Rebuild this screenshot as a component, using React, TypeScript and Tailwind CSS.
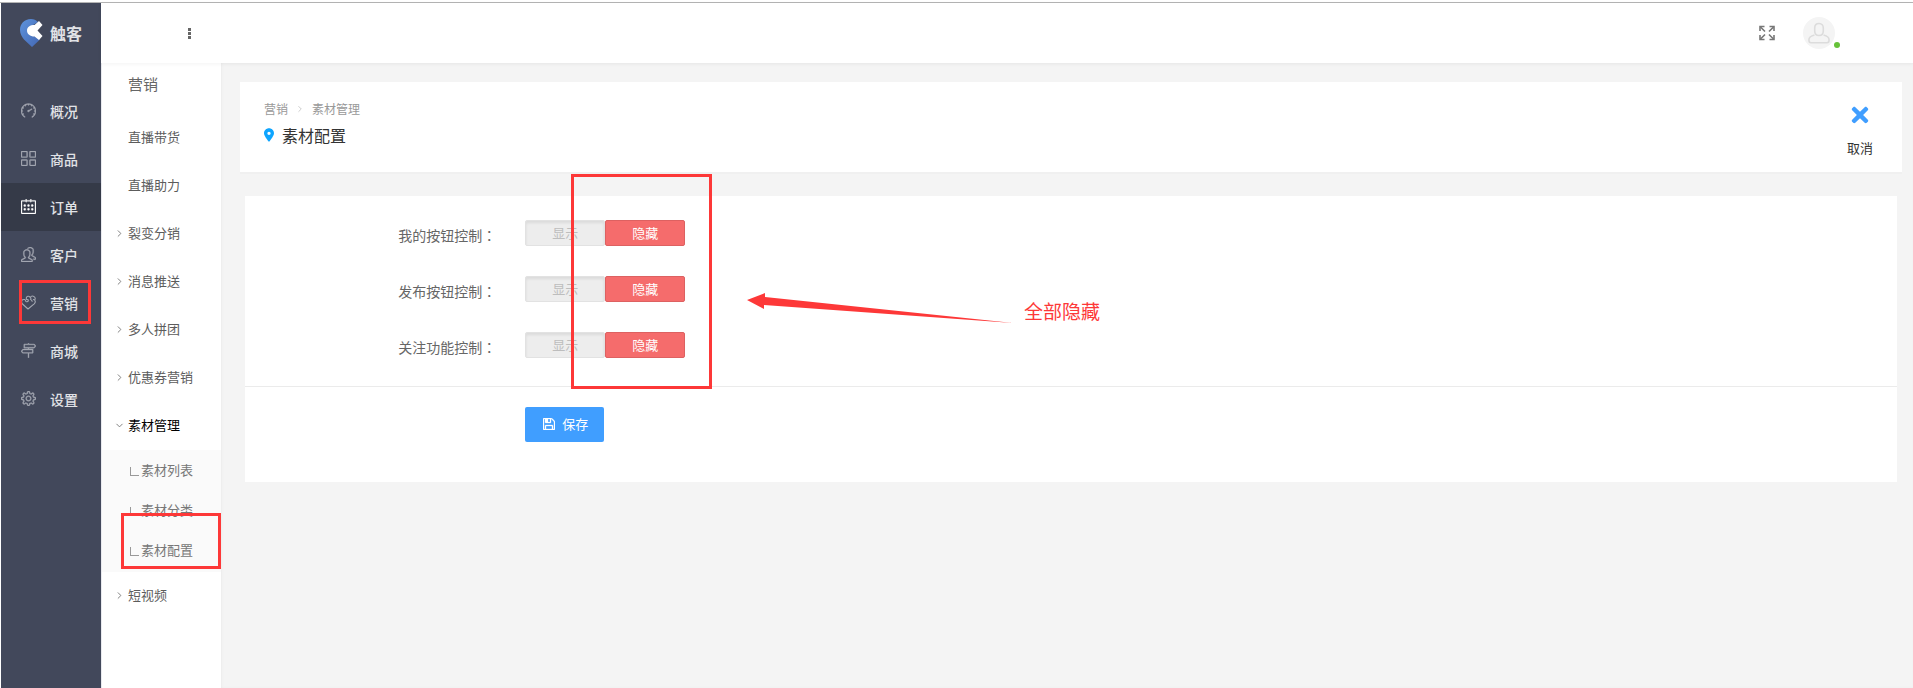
import { useState } from 'react';
import { ChevronDown, ChevronRight } from 'lucide-react';
import { FaTimes } from 'react-icons/fa';
import { FaLocationDot } from 'react-icons/fa6';
import {
  SlSpeedometer,
  SlGrid,
  SlCalender,
  SlPeople,
  SlDirections,
  SlSettings,
} from 'react-icons/sl';

const mainNav = [
  { label: '概况', icon: <SlSpeedometer size={15} strokeWidth={24} /> },
  { label: '商品', icon: <SlGrid size={15} strokeWidth={24} /> },
  { label: '订单', icon: <SlCalender size={15} strokeWidth={24} />, active: true },
  { label: '客户', icon: <SlPeople size={15} strokeWidth={24} /> },
  { label: '营销', icon: <MarketingIcon />, marked: true },
  { label: '商城', icon: <SlDirections size={15} strokeWidth={24} /> },
  { label: '设置', icon: <SlSettings size={15} strokeWidth={24} /> },
];

const subNav = [
  { label: '直播带货' },
  { label: '直播助力' },
  { label: '裂变分销', expandable: true },
  { label: '消息推送', expandable: true },
  { label: '多人拼团', expandable: true },
  { label: '优惠券营销', expandable: true },
  {
    label: '素材管理',
    expandable: true,
    children: [
      { label: '素材列表' },
      { label: '素材分类' },
      { label: '素材配置', marked: true },
    ],
  },
  { label: '短视频', expandable: true },
];

const settings = [
  { id: 'mine', label: '我的按钮控制' },
  { id: 'publish', label: '发布按钮控制' },
  { id: 'follow', label: '关注功能控制' },
];

function Logo() {
  return (
    <svg viewBox="0 0 24 28" className="w-6 h-7 shrink-0" aria-hidden="true">
      <defs>
        <linearGradient id="pin" x1="0" y1="0" x2="1" y2="1">
          <stop offset="0" stopColor="#5e93dc" />
          <stop offset="1" stopColor="#4468b4" />
        </linearGradient>
      </defs>
      <path d="M12 0C5 0 1 5 1 11c0 4 2 7 4 9.500L13 28l8-7.500-8.500-4.500L8 11l4.500-4L19 3C17 1 15 0 12 0Z" fill="url(#pin)" />
      <path d="M20 2 23.500 6 18.500 11.500 23.500 17 20 21 15.500 17.500C11 17.500 8 15 8 11.500S11 6 15.500 6Z" fill="#fff" />
    </svg>
  );
}

function MarketingIcon() {
  return (
    <svg viewBox="0 0 15 15" className="size-[15px]" fill="none" stroke="currentColor" strokeWidth="1.1" strokeLinejoin="round" aria-hidden="true">
      <path d="M7 14 1.500 9C.2 7.500.4 5.600 1.600 4.800c1.300-.8 2.700-.2 3 1 .3 1.300 2.200 1.300 2.600.2.500-1.300-.6-1.700-1.600-1.500-.7-1.400-.1-2.900 1.300-3.200 1.200-.2 2 .4 2.300 1.300.7-1.300 2.200-1.900 3.600-1.200C14.400 2.200 14.600 4 13.600 5c1 1.400.7 2.900-.4 3.900Z" />
      <path d="M9.200 2.600c.9.400 1 1.700 0 2.200M10 5c.9.200 1.300 1 1 1.800M13.600 5c-.5-.5-1.100-.6-1.600-.4" />
    </svg>
  );
}

function FullscreenIcon() {
  return (
    <svg viewBox="0 0 16 16" className="size-4" fill="none" stroke="currentColor" strokeWidth="1.6" aria-hidden="true">
      <path d="M1 6V1.500h4.500M10.500 1.500H15V6M15 10v4.500h-4.500M5.500 14.500H1V10" />
      <path d="M1.500 2 6 6.500M14.500 2 10 6.500M14.500 14 10 9.500M1.500 14 6 9.500" />
    </svg>
  );
}

function SaveIcon() {
  return (
    <svg viewBox="0 128 1536 1536" className="size-3" fill="currentColor" stroke="currentColor" strokeWidth="40" aria-hidden="true">
      <path d="M384 1536h768v-384h-768v384zm896 0h128v-896q0-14-10-38.500t-20-34.500l-281-281q-10-10-34-20t-39-10v416q0 40-28 68t-68 28h-576q-40 0-68-28t-28-68v-416h-128v1280h128v-416q0-40 28-68t68-28h832q40 0 68 28t28 68v416zm-384-928v-320q0-13-9.500-22.500t-22.500-9.500h-192q-13 0-22.500 9.500t-9.500 22.500v320q0 13 9.500 22.500t22.500 9.500h192q13 0 22.500-9.500t9.500-22.500zm640 32v928q0 40-28 68t-68 28h-1344q-40 0-68-28t-28-68v-1344q0-40 28-68t68-28h928q40 0 88 20t76 48l280 280q28 28 48 76t20 88z" />
    </svg>
  );
}

function MainSidebar() {
  return (
    <aside className="w-[100px] shrink-0 bg-[#42485b] text-[#e0e2e6]">
      <a href="#home" className="flex h-[60px] items-center gap-[7px] pb-px pl-[18px] text-base font-bold">
        <Logo />
        触客
      </a>
      <nav className="mt-6">
        {mainNav.map(({ label, icon, active, marked }) => (
          <a
            key={label}
            href={`#${label}`}
            className={`relative flex h-12 items-center gap-3.5 pb-px pl-5 text-sm font-medium ${active ? 'bg-[#353a48]' : ''}`}
          >
            <span className={active ? 'text-white' : 'text-[#a3a7b1]'}>{icon}</span>
            {label}
            {marked && <span className="absolute top-px left-[18px] h-11 w-[72px] border-3 border-[#fd3838]" />}
          </a>
        ))}
      </nav>
    </aside>
  );
}

function SubSidebar() {
  return (
    <aside className="w-[120px] shrink-0 border-l border-[#e8e9ee] bg-white text-[13px] text-[#5c5c5c]">
      <h2 className="flex h-[51px] items-center pl-[26px] pb-2 text-[15px] text-[#666]">营销</h2>
      <ul>
        {subNav.map(({ label, expandable, children }) => (
          <li key={label}>
            <a
              href={`#${label}`}
              className={`flex h-12 items-center gap-1 pb-0.5 pl-3 ${children ? 'text-black' : ''}`}
            >
              <span className="w-[10px] text-[#777]">
                {expandable && (children ? <ChevronDown size={11} /> : <ChevronRight size={11} />)}
              </span>
              {label}
            </a>
            {children && (
              <ul className="bg-[#fafafa] pb-0.5 text-[#777]">
                {children.map((child) => (
                  <li key={child.label} className="relative">
                    <a href={`#${child.label}`} className="flex h-10 items-center gap-0.5 pl-7">
                      <span className="mt-0.5 size-[9px] border-b border-l border-[#999]" />
                      {child.label}
                    </a>
                    {child.marked && (
                      <span className="absolute -top-[17px] right-0 h-14 w-[100px] border-3 border-[#fd3838]" />
                    )}
                  </li>
                ))}
              </ul>
            )}
          </li>
        ))}
      </ul>
    </aside>
  );
}

function Header() {
  return (
    <header className="relative z-10 flex h-[60px] items-center justify-between bg-white pr-[78px] pl-[87px] shadow-[0_1px_4px_rgba(0,0,0,0.05)]">
      <button type="button" aria-label="菜单" className="flex flex-col gap-px">
        <span className="size-[3px] bg-[#666]" />
        <span className="size-[3px] bg-[#666]" />
        <span className="size-[3px] bg-[#666]" />
      </button>
      <div className="flex items-center gap-7">
        <button type="button" aria-label="全屏" className="text-[#777]">
          <FullscreenIcon />
        </button>
        <button type="button" aria-label="账户" className="relative flex size-8 items-center justify-center rounded-full bg-[#f4f4f4]">
          <svg viewBox="0 0 22 22" className="size-[22px]" fill="none" stroke="#dcdcdc" strokeWidth="1.6" aria-hidden="true">
            <path d="M11 1.500c-2.800 0-4.300 2-4.300 4.500v3c0 2.500 1.600 4.500 4.300 4.500s4.300-2 4.300-4.500V6c0-2.500-1.500-4.500-4.300-4.500Z" />
            <path d="M6.500 13C3 13.800.9 15.300.9 18c0 2 .8 2.800 2.200 2.800h15.800c1.400 0 2.200-.8 2.200-2.800 0-2.700-2.100-4.200-5.600-5" />
          </svg>
          <span className="absolute -right-[5px] bottom-px size-1.5 rounded-full bg-[#67c23a]" />
        </button>
      </div>
    </header>
  );
}

function PageTitle() {
  return (
    <section className="flex h-[90px] justify-between bg-white pt-[17px] pr-7 pl-6 shadow-[0_2px_0_#f0f0f0]">
      <div>
        <nav className="flex items-center gap-[7px] text-xs leading-5 text-[#999]">
          <a href="#marketing">营销</a>
          <ChevronRight size={10} className="text-[#c4c4c4]" />
          <a href="#material">素材管理</a>
        </nav>
        <h1 className="mt-1 flex items-center gap-2 text-base leading-6 text-[#333]">
          <FaLocationDot size={14} className="w-[10px] text-[#0ea5ff]" />
          素材配置
        </h1>
      </div>
      <button type="button" className="flex flex-col items-center gap-[11px] self-start pt-1 pr-px text-[13px] text-[#333]">
        <FaTimes size={24} className="text-[#409eff]" />
        取消
      </button>
    </section>
  );
}

function VisibilitySwitch({ id, label }: { id: string; label: string }) {
  const [visible, setVisible] = useState(false);

  return (
    <div className="flex" role="radiogroup" aria-label={label}>
      {[true, false].map((value) => (
        <label
          key={String(value)}
          className={`relative flex h-[26px] w-20 cursor-pointer items-center justify-center rounded-xs border pb-px text-[13px] ${
            visible === value
              ? 'border-[#dd6161] bg-[#f56c6c] text-white'
              : 'border-[#e2e2e2] bg-[#ededed] text-[#bdbdbd] shadow-[inset_0_2px_3px_rgba(0,0,0,0.08)]'
          }`}
        >
          <input
            type="radio"
            name={id}
            checked={visible === value}
            onChange={() => setVisible(value)}
            className="sr-only"
          />
          {value ? '显示' : '隐藏'}
        </label>
      ))}
    </div>
  );
}

function Annotation() {
  return (
    <div className="pointer-events-none absolute top-0 left-0 text-[#fd3838]">
      <span className="absolute -top-[22px] left-[326px] h-[215px] w-[141px] border-3 border-[#fd3838]" />
      <svg viewBox="0 0 268 32" className="absolute top-[96px] left-[502px] h-8 w-[268px]" fill="currentColor" aria-hidden="true">
        <path d="M0 8 18 1v4l248 26L17 13v4Z" />
      </svg>
      <span className="absolute top-[101px] left-[779px] text-[19px] leading-7 whitespace-nowrap">全部隐藏</span>
    </div>
  );
}

function SettingsForm() {
  return (
    <form className="relative mx-[5px] mt-6 bg-white" onSubmit={(e) => e.preventDefault()}>
      <div className="flex flex-col gap-[30px] border-b border-[#ebebeb] pt-6 pb-7">
        {settings.map(({ id, label }) => (
          <div key={id} className="flex h-[26px]">
            <div className="w-1/6 pt-[5px] pr-6 text-right text-sm text-[#666]">
              {label}
              <span className="font-['Noto_Sans_CJK_TC',sans-serif]" lang="zh-TW">：</span>
            </div>
            <div className="pl-[5px]">
              <VisibilitySwitch id={id} label={label} />
            </div>
          </div>
        ))}
      </div>
      <div className="flex pt-5 pb-10">
        <div className="w-1/6" />
        <div className="pl-[5px]">
          <button type="submit" className="flex h-[35px] w-[79px] items-center justify-center gap-[7px] rounded-xs bg-[#409eff] pb-px pl-0.5 text-[13px] text-white">
            <SaveIcon />
            保存
          </button>
        </div>
      </div>
      <Annotation />
    </form>
  );
}

export default function App() {
  return (
    <div className="flex min-h-screen flex-col bg-white pt-0.5 font-['Noto_Sans_CJK_SC',sans-serif]" lang="zh-CN">
      <div className="flex flex-1 border-t border-[#b5b5b5] pl-px">
        <MainSidebar />
        <div className="flex min-w-0 flex-1 flex-col">
          <Header />
          <div className="flex flex-1">
            <SubSidebar />
            <main className="min-w-0 flex-1 bg-[#f4f4f4] pt-[19px] pr-[11px] pl-[19px] shadow-[inset_1px_0_2px_#ececec]">
              <PageTitle />
              <SettingsForm />
            </main>
          </div>
        </div>
      </div>
    </div>
  );
}
